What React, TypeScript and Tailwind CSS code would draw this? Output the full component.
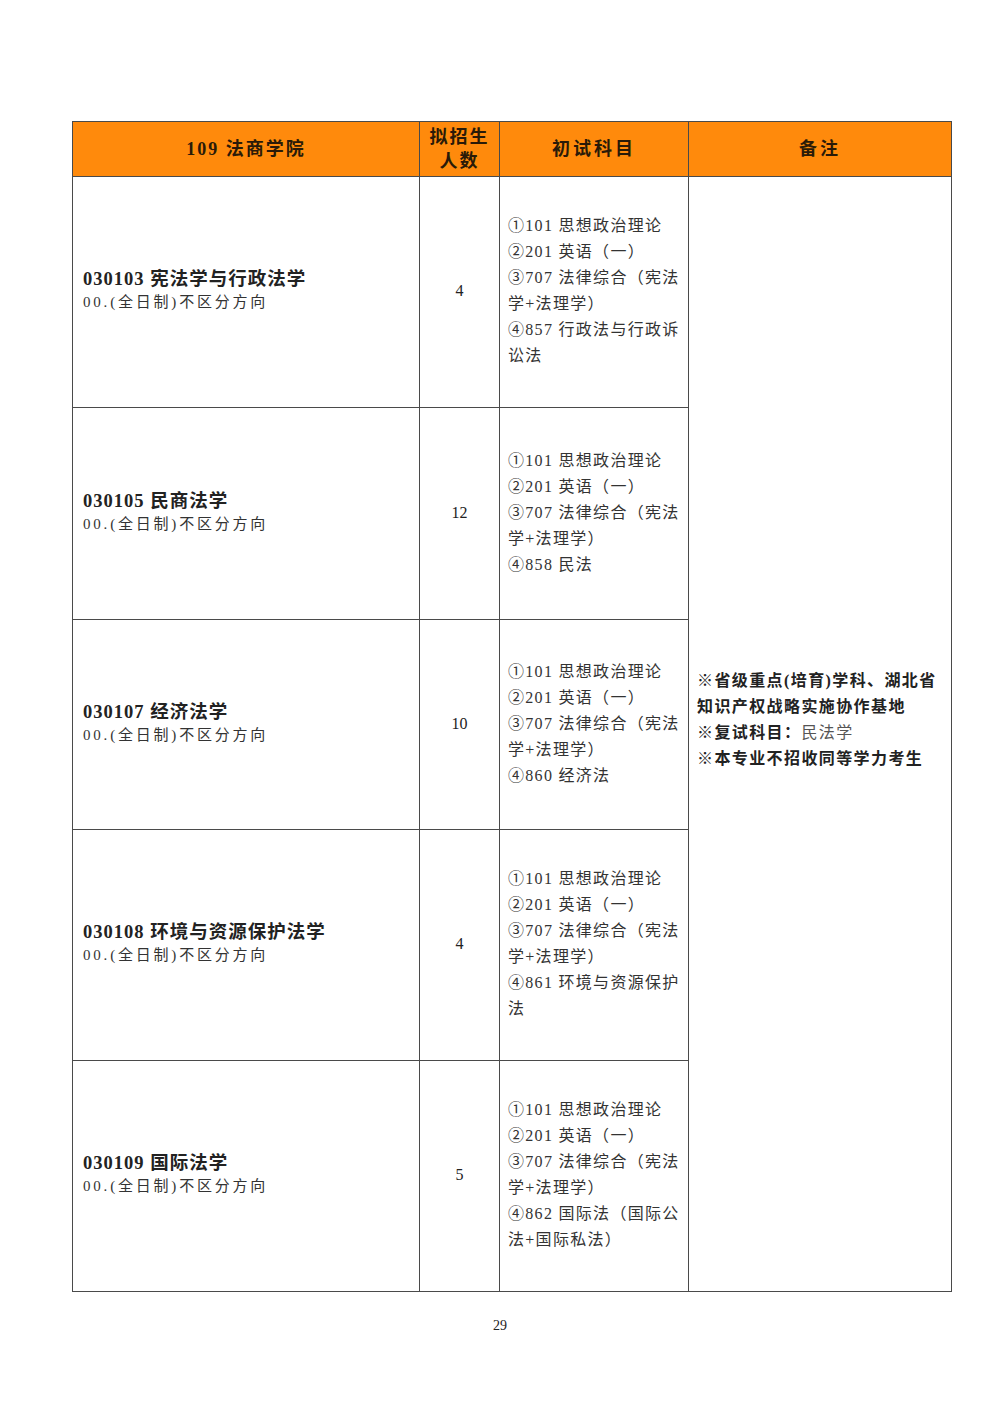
import React from "react";

const rows = [
  {
    code: "030103 宪法学与行政法学",
    count: "4",
    subjects: ["①101 思想政治理论", "②201 英语（一）", "③707 法律综合（宪法", "学+法理学）", "④857 行政法与行政诉", "讼法"],
    h: "h-[231px]",
  },
  {
    code: "030105 民商法学",
    count: "12",
    subjects: ["①101 思想政治理论", "②201 英语（一）", "③707 法律综合（宪法", "学+法理学）", "④858 民法"],
    h: "h-[212px]",
  },
  {
    code: "030107 经济法学",
    count: "10",
    subjects: ["①101 思想政治理论", "②201 英语（一）", "③707 法律综合（宪法", "学+法理学）", "④860 经济法"],
    h: "h-[210px]",
  },
  {
    code: "030108 环境与资源保护法学",
    count: "4",
    subjects: ["①101 思想政治理论", "②201 英语（一）", "③707 法律综合（宪法", "学+法理学）", "④861 环境与资源保护", "法"],
    h: "h-[231px]",
  },
  {
    code: "030109 国际法学",
    count: "5",
    subjects: ["①101 思想政治理论", "②201 英语（一）", "③707 法律综合（宪法", "学+法理学）", "④862 国际法（国际公", "法+国际私法）"],
    h: "h-[231px]",
  },
];

const font = "font-['Liberation_Serif','Noto_Sans_CJK_SC',serif]";

export default function App() {
  return (
    <div className={`w-[1000px] h-[1414px] bg-white text-[#222] ${font}`}>
      <div className="pt-[121px] pl-[72px]">
        <div className="flex border-l border-t border-[#4a4a4a] w-[880px]">
          {/* left three columns */}
          <div className="flex flex-col">
            {/* header */}
            <div className="flex h-[55px] bg-[#ff8a0c] font-bold text-[18px] text-[#2a1a08]">
              <div className="w-[347px] border-r border-b border-[#4a4a4a] flex items-center justify-center tracking-[2px]">
                109 法商学院
              </div>
              <div className="w-[80px] border-r border-b border-[#4a4a4a] flex flex-col items-center justify-center leading-[24px] tracking-[2px]">
                <span>拟招生</span>
                <span>人数</span>
              </div>
              <div className="w-[189px] border-r border-b border-[#4a4a4a] flex items-center justify-center tracking-[3px]">
                初试科目
              </div>
            </div>
            {rows.map((r) => (
              <div key={r.code} className={`flex ${r.h}`}>
                <div className="w-[347px] border-r border-b border-[#4a4a4a] flex flex-col justify-center pl-[10px] pb-[4px]">
                  <div className="text-[18.5px] font-bold leading-[24px] tracking-[1px]">{r.code}</div>
                  <div className="text-[15px] leading-[22px] tracking-[2.8px] text-[#333]">00.(全日制)不区分方向</div>
                </div>
                <div className="w-[80px] border-r border-b border-[#4a4a4a] flex items-center justify-center text-[16px] pb-[2px]">
                  {r.count}
                </div>
                <div className="w-[189px] border-r border-b border-[#4a4a4a] flex flex-col justify-center pl-[8px] text-[16px] leading-[26px] tracking-[1.3px] text-[#333] pb-[2px]">
                  {r.subjects.map((s, i) => (
                    <div key={i} className="whitespace-nowrap">{s}</div>
                  ))}
                </div>
              </div>
            ))}
          </div>
          {/* remarks column */}
          <div className="flex flex-col w-[263px]">
            <div className="h-[55px] bg-[#ff8a0c] border-r border-b border-[#4a4a4a] flex items-center justify-center font-bold text-[18px] tracking-[3px] text-[#2a1a08]">
              备注
            </div>
            <div className="flex-1 border-r border-b border-[#4a4a4a] flex flex-col justify-center pl-[8px] pb-[28px] text-[16px] leading-[26px] text-[#222] tracking-[1.4px]">
              <div className="font-bold whitespace-nowrap">※省级重点(培育)学科、湖北省</div>
              <div className="font-bold whitespace-nowrap">知识产权战略实施协作基地</div>
              <div className="whitespace-nowrap">
                <span className="font-bold">※复试科目：</span>
                <span className="text-[#555]">民法学</span>
              </div>
              <div className="font-bold whitespace-nowrap">※本专业不招收同等学力考生</div>
            </div>
          </div>
        </div>
      </div>
      <div className="text-center text-[14px] mt-[23px] font-['Liberation_Serif',serif]">29</div>
    </div>
  );
}
